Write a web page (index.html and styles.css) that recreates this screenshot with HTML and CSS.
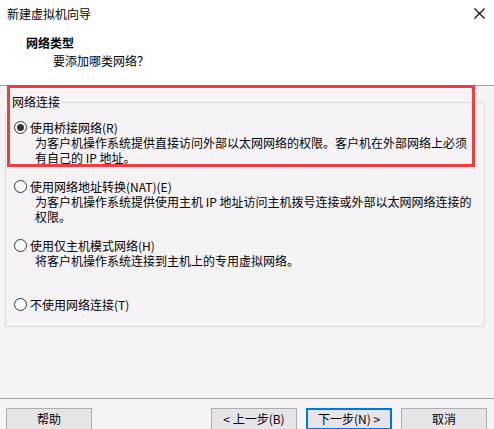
FILE: index.html
```html
<!DOCTYPE html>
<html lang="zh-CN">
<head>
<meta charset="utf-8">
<title>新建虚拟机向导</title>
<link rel="stylesheet" href="styles.css">
</head>
<body>
<div class="dialog">
  <header class="header">
    <div class="titlebar">
      <span class="title">新建虚拟机向导</span>
      <svg class="close" width="11" height="11" viewBox="0 0 11 11"><path d="M0.5 0.5 L10.5 10.5 M10.5 0.5 L0.5 10.5" stroke="#000" stroke-width="1.1" fill="none"/></svg>
    </div>
    <div class="heading">网络类型</div>
    <div class="subheading">要添加哪类网络？</div>
  </header>

  <main class="content">
    <fieldset class="group">
      <legend class="legend">网络连接</legend>
      <div class="option">
        <div class="opt-row"><span class="radio checked"></span><span>使用桥接网络(R)</span></div>
        <div class="desc">为客户机操作系统提供直接访问外部以太网网络的权限。客户机在外部网络上必须<br>有自己的 IP 地址。</div>
      </div>
      <div class="option">
        <div class="opt-row"><span class="radio"></span><span>使用网络地址转换(NAT)(E)</span></div>
        <div class="desc">为客户机操作系统提供使用主机 IP 地址访问主机拨号连接或外部以太网网络连接的<br>权限。</div>
      </div>
      <div class="option">
        <div class="opt-row"><span class="radio"></span><span>使用仅主机模式网络(H)</span></div>
        <div class="desc">将客户机操作系统连接到主机上的专用虚拟网络。</div>
      </div>
      <div class="option last">
        <div class="opt-row"><span class="radio"></span><span>不使用网络连接(T)</span></div>
      </div>
    </fieldset>
  </main>

  <footer class="footer">
    <button class="btn">帮助</button>
    <div class="nav">
      <button class="btn">&lt; 上一步(B)</button>
      <button class="btn primary">下一步(N) &gt;</button>
      <button class="btn">取消</button>
    </div>
  </footer>

  <div class="annotation"></div>
</div>
</body>
</html>
```

FILE: styles.css
```css
* { box-sizing: border-box; }

html, body {
  margin: 0;
  padding: 0;
}

body {
  width: 494px;
  height: 429px;
  background: #f6f3f7;
  font-family: "Noto Sans CJK SC", "Microsoft YaHei", "Liberation Sans", sans-serif;
  font-size: 12px;
  color: #000;
  overflow: hidden;
}

.dialog {
  position: relative;
  width: 494px;
  height: 429px;
}

.header {
  height: 86px;
  background: #fff;
  border-bottom: 1px solid #a0a0a0;
}

.titlebar {
  height: 28px;
  display: flex;
  align-items: center;
  justify-content: space-between;
  padding: 0 9px 0 7px;
  line-height: 16px;
}

.close {
  display: block;
  margin-top: -1px;
}

.heading {
  margin-top: 7px;
  padding-left: 26px;
  font-weight: bold;
  line-height: 16px;
}

.subheading {
  margin-top: 2px;
  padding-left: 53px;
  line-height: 16px;
}

.content {
  height: 304px;
}

.group {
  margin: 8px 0 0 5px;
  width: 480px;
  height: 233px;
  padding: 10px 8px 0 8px;
  border: 1px solid #dcdadd;
}

.legend {
  padding: 0 1px 0 7px;
  margin-left: -9px;
  line-height: 16px;
}

.option + .option {
  margin-top: 14px;
}

.option.last {
  margin-top: 29px;
}

.opt-row {
  display: flex;
  align-items: center;
  line-height: 15px;
  height: 15px;
}

.radio {
  width: 13px;
  height: 13px;
  border: 1px solid #333;
  border-radius: 50%;
  background: #fff;
  margin-right: 3px;
  flex: none;
  position: relative;
}

.radio.checked::after {
  content: "";
  position: absolute;
  left: 2px;
  top: 2px;
  width: 7px;
  height: 7px;
  border-radius: 50%;
  background: #333;
}

.desc {
  padding-left: 21px;
  line-height: 15px;
  white-space: nowrap;
}

.footer {
  height: 39px;
  border-top: 1px solid #a0a0a0;
  display: flex;
  align-items: flex-start;
  justify-content: space-between;
  padding: 9px 7px 0 6px;
}

.nav {
  display: flex;
  gap: 9px;
}

.btn {
  width: 86px;
  height: 22px;
  background: #e6e4e8;
  border: 1px solid #adadad;
  font-family: inherit;
  font-size: 12px;
  color: #000;
  padding: 0;
  line-height: 18px;
  border-radius: 0;
}

.btn.primary {
  border: 2px solid #0078d7;
}

.annotation {
  position: absolute;
  left: 7px;
  top: 85px;
  width: 468px;
  height: 82px;
  border: 3px solid #f23d3d;
  pointer-events: none;
}
```
